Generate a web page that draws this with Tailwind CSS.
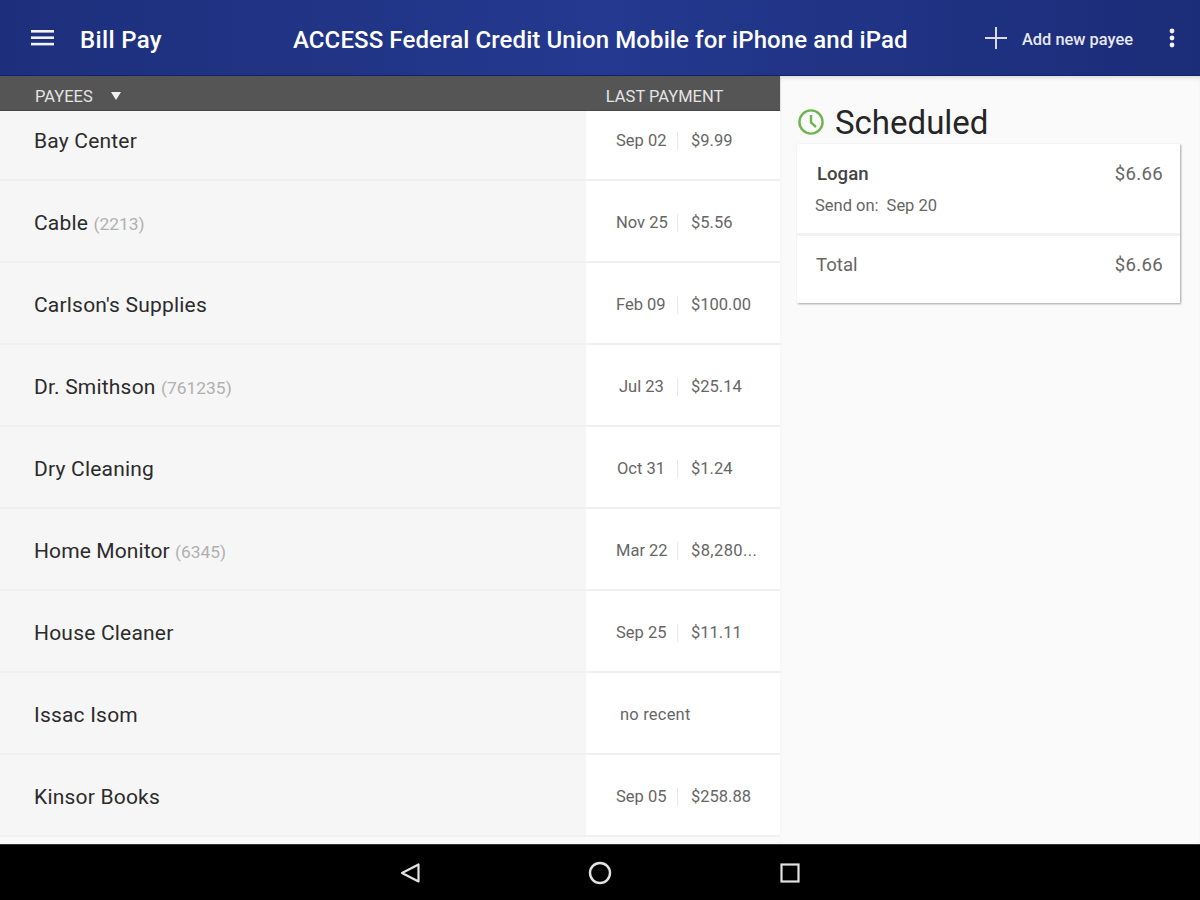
<!DOCTYPE html>
<html lang="en">
<head>
  <meta charset="UTF-8" />
  <title>Bill Pay</title>
  <script src="https://cdn.jsdelivr.net/npm/@tailwindcss/browser@4"></script>
</head>
<body class="font-['Roboto',sans-serif]">
  <div class="w-[1200px] h-[900px] flex flex-col overflow-hidden bg-[#fafafa]">
    <!-- top bar -->
    <header class="h-[76px] shrink-0 flex items-center text-white bg-gradient-to-r from-[#1d2f7c] via-[#24398f] to-[#1b2c78] border-b border-[#14206a]">
      <svg class="ml-[31px] w-[24px] h-[18px]" viewBox="0 0 24 18" fill="#f2f3f8"><rect y="1" width="23" height="2.6"/><rect y="7.4" width="23" height="2.6"/><rect y="13.8" width="23" height="2.6"/></svg>
      <div class="ml-[25px] w-[213px] pt-[5px] text-[24px] tracking-[0.35px] font-medium leading-none">Bill Pay</div>
      <div class="w-[615px] pt-[5px] text-[24px] tracking-[0.1px] font-medium leading-none whitespace-nowrap">ACCESS Federal Credit Union Mobile for iPhone and iPad</div>
      <svg class="ml-[76px] w-[24px] h-[24px]" viewBox="0 0 24 24" fill="#d9dcec"><rect x="11" y="1" width="2" height="22"/><rect x="1" y="11" width="22" height="2"/></svg>
      <div class="ml-[14px] w-[146px] pt-[5px] text-[16.4px] font-medium leading-none text-[#e6e8f2] whitespace-nowrap">Add new payee</div>
      <svg class="w-[8px] h-[20px]" viewBox="0 0 8 20" fill="#f2f3f8"><circle cx="4" cy="3" r="2.4"/><circle cx="4" cy="10" r="2.4"/><circle cx="4" cy="17" r="2.4"/></svg>
    </header>

    <div class="flex-1 flex min-h-0">
      <!-- payee list -->
      <main class="w-[780px] shrink-0 flex flex-col">
        <div class="h-[35px] shrink-0 flex items-center pt-[8px] bg-[#555555] text-[#e4e4e4] text-[16.5px] leading-none border-b border-[#444444] shadow-[0_1px_2px_rgba(0,0,0,0.25)]">
          <span class="ml-[35px]">PAYEES</span>
          <svg class="ml-[18px] -mt-[2px] -translate-x-[1px] w-[12px] h-[8px]" viewBox="0 0 12 8" fill="#f0f0f0"><path d="M1 0h10L6 8z"/></svg>
          <span class="ml-[483px]">LAST PAYMENT</span>
        </div>

        <div class="h-[70px] shrink-0 flex border-b-2 border-[#f0f0f0]">
          <div class="w-[586px] pl-[34px] pt-[17px] bg-[#f6f6f6] text-[21px] tracking-[0.2px] leading-[26px] text-[#2b2b2b]">Bay Center</div>
          <div class="flex-1 flex items-start pt-[21px] bg-white text-[16.5px] leading-[18px] text-[#666666]"><span class="w-[92px] pl-[30px] border-r border-[#e8e8e8] whitespace-nowrap">Sep 02</span><span class="pl-[13px]">$9.99</span></div>
        </div>
        <div class="h-[82px] shrink-0 flex border-b-2 border-[#f0f0f0]">
          <div class="w-[586px] pl-[34px] pt-[29px] bg-[#f6f6f6] text-[21px] tracking-[0.2px] leading-[26px] text-[#2b2b2b]">Cable <span class="text-[17.4px] tracking-normal text-[#b0b0b0]">(2213)</span></div>
          <div class="flex-1 flex items-start pt-[33px] bg-white text-[16.5px] leading-[18px] text-[#666666]"><span class="w-[92px] pl-[30px] border-r border-[#e8e8e8] whitespace-nowrap">Nov 25</span><span class="pl-[13px]">$5.56</span></div>
        </div>
        <div class="h-[82px] shrink-0 flex border-b-2 border-[#f0f0f0]">
          <div class="w-[586px] pl-[34px] pt-[29px] bg-[#f6f6f6] text-[21px] tracking-[0.2px] leading-[26px] text-[#2b2b2b]">Carlson's Supplies</div>
          <div class="flex-1 flex items-start pt-[33px] bg-white text-[16.5px] leading-[18px] text-[#666666]"><span class="w-[92px] pl-[30px] border-r border-[#e8e8e8] whitespace-nowrap">Feb 09</span><span class="pl-[13px]">$100.00</span></div>
        </div>
        <div class="h-[82px] shrink-0 flex border-b-2 border-[#f0f0f0]">
          <div class="w-[586px] pl-[34px] pt-[29px] bg-[#f6f6f6] text-[21px] tracking-[0.2px] leading-[26px] text-[#2b2b2b]">Dr. Smithson <span class="text-[17.4px] tracking-normal text-[#b0b0b0]">(761235)</span></div>
          <div class="flex-1 flex items-start pt-[33px] bg-white text-[16.5px] leading-[18px] text-[#666666]"><span class="w-[92px] pl-[33px] border-r border-[#e8e8e8] whitespace-nowrap">Jul 23</span><span class="pl-[13px]">$25.14</span></div>
        </div>
        <div class="h-[82px] shrink-0 flex border-b-2 border-[#f0f0f0]">
          <div class="w-[586px] pl-[34px] pt-[29px] bg-[#f6f6f6] text-[21px] tracking-[0.2px] leading-[26px] text-[#2b2b2b]">Dry Cleaning</div>
          <div class="flex-1 flex items-start pt-[33px] bg-white text-[16.5px] leading-[18px] text-[#666666]"><span class="w-[92px] pl-[31px] border-r border-[#e8e8e8] whitespace-nowrap">Oct 31</span><span class="pl-[13px]">$1.24</span></div>
        </div>
        <div class="h-[82px] shrink-0 flex border-b-2 border-[#f0f0f0]">
          <div class="w-[586px] pl-[34px] pt-[29px] bg-[#f6f6f6] text-[21px] tracking-[0.1px] leading-[26px] text-[#2b2b2b]">Home Monitor <span class="text-[17.4px] tracking-normal text-[#b0b0b0]">(6345)</span></div>
          <div class="flex-1 flex items-start pt-[33px] bg-white text-[16.5px] leading-[18px] text-[#666666]"><span class="w-[92px] pl-[30px] border-r border-[#e8e8e8] whitespace-nowrap">Mar 22</span><span class="pl-[13px] tracking-[0.4px]">$8,280...</span></div>
        </div>
        <div class="h-[82px] shrink-0 flex border-b-2 border-[#f0f0f0]">
          <div class="w-[586px] pl-[34px] pt-[29px] bg-[#f6f6f6] text-[21px] tracking-[0.2px] leading-[26px] text-[#2b2b2b]">House Cleaner</div>
          <div class="flex-1 flex items-start pt-[33px] bg-white text-[16.5px] leading-[18px] text-[#666666]"><span class="w-[92px] pl-[30px] border-r border-[#e8e8e8] whitespace-nowrap">Sep 25</span><span class="pl-[13px]">$11.11</span></div>
        </div>
        <div class="h-[82px] shrink-0 flex border-b-2 border-[#f0f0f0]">
          <div class="w-[586px] pl-[34px] pt-[29px] bg-[#f6f6f6] text-[21px] tracking-[0.2px] leading-[26px] text-[#2b2b2b]">Issac Isom</div>
          <div class="flex-1 flex items-start pt-[33px] bg-white text-[16.5px] leading-[18px] text-[#666666]"><span class="pl-[34px] tracking-[0.2px]">no recent</span></div>
        </div>
        <div class="h-[82px] shrink-0 flex border-b-2 border-[#f0f0f0]">
          <div class="w-[586px] pl-[34px] pt-[29px] bg-[#f6f6f6] text-[21px] tracking-[0.2px] leading-[26px] text-[#2b2b2b]">Kinsor Books</div>
          <div class="flex-1 flex items-start pt-[33px] bg-white text-[16.5px] leading-[18px] text-[#666666]"><span class="w-[92px] pl-[30px] border-r border-[#e8e8e8] whitespace-nowrap">Sep 05</span><span class="pl-[13px]">$258.88</span></div>
        </div>
      </main>

      <!-- scheduled panel -->
      <aside class="flex-1 pl-[17px] pr-[20px] shadow-[inset_0_4px_4px_-2px_rgba(0,0,0,0.12)]">
        <div class="h-[68px] flex items-center pt-[24px]">
          <svg class="w-[28px] h-[28px]" viewBox="0 0 28 28" fill="none" stroke="#6fb54f" stroke-width="2.4"><circle cx="14" cy="14" r="11.6"/><path d="M14 7v7.5l5 4.5"/></svg>
          <span class="ml-[10px] text-[33px] leading-none text-[#262626]">Scheduled</span>
        </div>
        <div class="bg-white shadow-[1px_1px_2px_rgba(0,0,0,0.35)]">
          <div class="h-[92px] pl-[20px] pr-[17px] pt-[19px] border-b-[3px] border-[#f2f2f2]">
            <div class="flex justify-between text-[18.6px] leading-[22px] text-[#444444]"><span class="font-medium">Logan</span><span class="tracking-[0.3px] text-[#666666]">$6.66</span></div>
            <div class="-ml-[2px] mt-[12px] flex gap-[8px] text-[16.5px] leading-[18px] text-[#666666]"><span>Send on:</span><span>Sep 20</span></div>
          </div>
          <div class="h-[67px] pl-[19px] pr-[17px] pt-[18px] flex justify-between text-[18.6px] leading-[22px] text-[#666666]"><span>Total</span><span class="tracking-[0.3px]">$6.66</span></div>
        </div>
      </aside>
    </div>

    <!-- android nav bar -->
    <nav class="h-[56px] shrink-0 bg-black flex items-center border-t border-[#333333]">
      <svg class="ml-[399px] w-[22px] h-[22px]" viewBox="0 0 22 22" fill="none" stroke="#e2e2e2" stroke-width="2.2" stroke-linejoin="round"><path d="M19.5 2.5v17L3 11z"/></svg>
      <svg class="ml-[167px] w-[24px] h-[24px]" viewBox="0 0 24 24" fill="none" stroke="#e2e2e2" stroke-width="2.4"><circle cx="12" cy="12" r="10"/></svg>
      <svg class="ml-[168px] w-[20px] h-[20px]" viewBox="0 0 20 20" fill="none" stroke="#e2e2e2" stroke-width="2.2"><rect x="1.5" y="1.5" width="17" height="17"/></svg>
    </nav>
  </div>
</body>
</html>
